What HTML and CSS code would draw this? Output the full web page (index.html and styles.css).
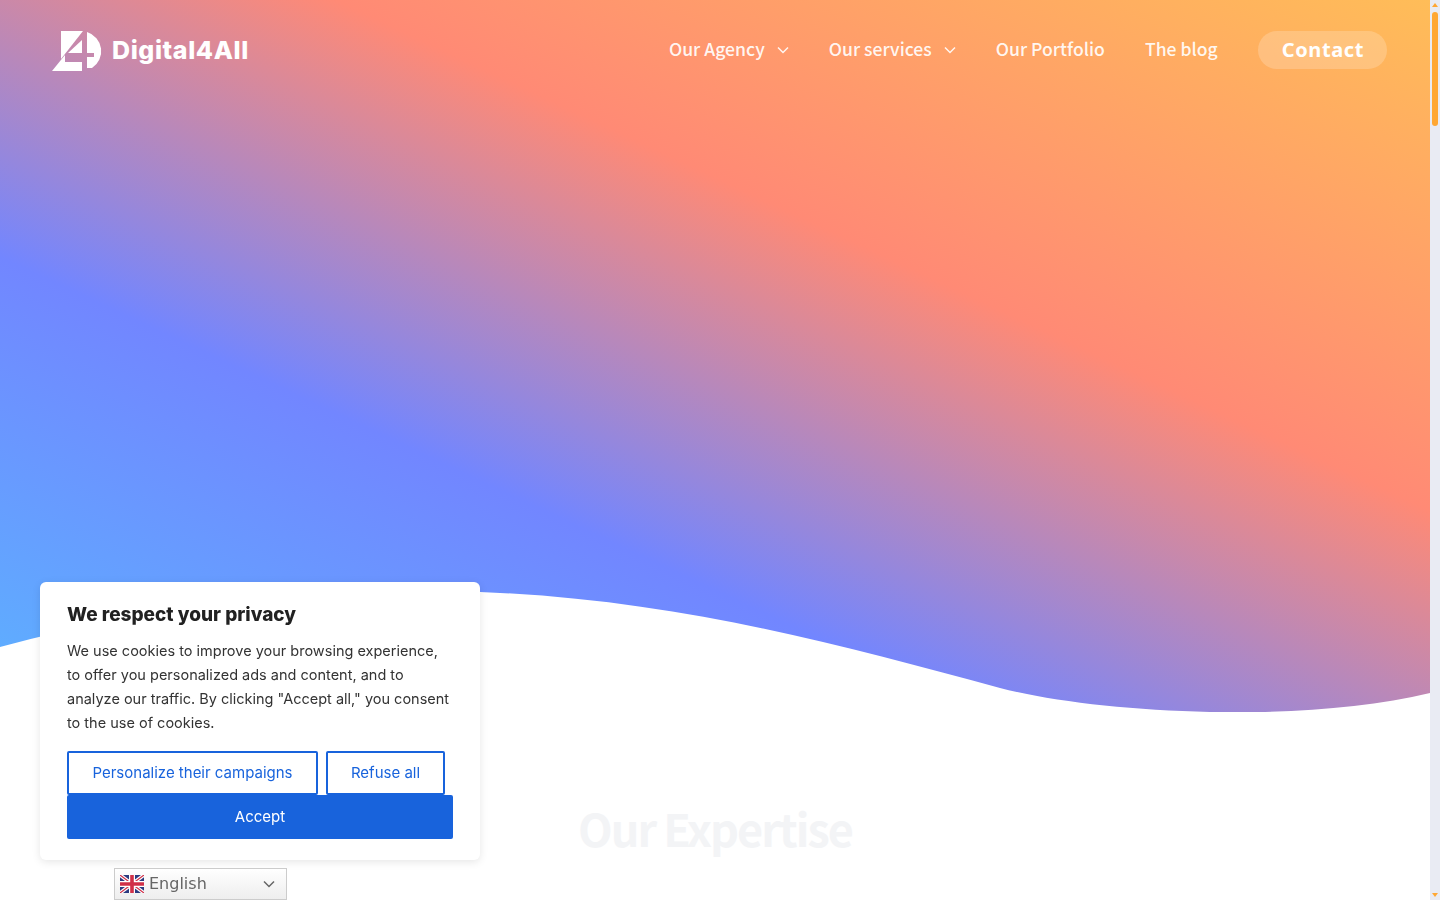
FILE: index.html
```html
<!DOCTYPE html>
<html lang="en">
<head>
    <meta charset="UTF-8">
    <meta name="viewport" content="width=device-width, initial-scale=1.0">
    <title>Digital4All</title>
    <link rel="stylesheet" href="styles.css">
</head>
<body>
    <div class="window">
        <div class="page">
            <section class="hero">
                <header class="site-header">
                    <a class="logo" href="#">
                        <svg class="logo-mark" width="52" height="42" viewBox="52 29 52 42">
                            <path d="M61 31H83L61 59Z"/>
                            <path d="M52 71L65 55V62H82V71Z"/>
                            <path d="M82 40V53H68Z"/>
                            <path d="M87 32A20 20 0 0 1 92 68L87 68V57H94V53H87Z"/>
                        </svg>
                        <span class="logo-text">Digital4All</span>
                    </a>
                    <nav class="main-nav">
                        <a class="nav-link" href="#">Our Agency
                            <svg class="chevron" width="12" height="8" viewBox="0 0 12 8"><path d="M1 1.5L6 6.5L11 1.5"/></svg>
                        </a>
                        <a class="nav-link" href="#">Our services
                            <svg class="chevron" width="12" height="8" viewBox="0 0 12 8"><path d="M1 1.5L6 6.5L11 1.5"/></svg>
                        </a>
                        <a class="nav-link" href="#">Our Portfolio</a>
                        <a class="nav-link" href="#">The blog</a>
                        <a class="contact-btn" href="#">Contact</a>
                    </nav>
                </header>
                <svg class="wave" width="1430" height="130" viewBox="0 582 1430 130">
                    <path d="M0 647C150 606 320 585 480 592C680 600 840 645 1000 688C1100 714 1300 724 1430 693V712H0Z"/>
                </svg>
            </section>
            <section class="expertise">
                <h2>Our Expertise</h2>
            </section>
        </div>
        <div class="scrollbar">
            <span class="arrow-up"></span>
            <span class="thumb"></span>
            <span class="arrow-down"></span>
        </div>
    </div>

    <div class="cookie-card">
        <h3>We respect your privacy</h3>
        <p>We use cookies to improve your browsing experience, to offer you personalized ads and content, and to analyze our traffic. By clicking "Accept all," you consent to the use of cookies.</p>
        <div class="cookie-actions">
            <button class="btn-outline btn-personalize">Personalize their campaigns</button>
            <button class="btn-outline btn-refuse">Refuse all</button>
            <button class="btn-accept">Accept</button>
        </div>
    </div>

    <div class="lang-select">
        <svg class="flag" width="24" height="18" viewBox="0 0 24 18">
            <rect width="24" height="18" fill="#2b3a80"/>
            <path d="M0 0L24 18M24 0L0 18" stroke="#fff" stroke-width="3.6"/>
            <path d="M0 0L24 18M24 0L0 18" stroke="#d03048" stroke-width="1.2"/>
            <path d="M12 0V18M0 9H24" stroke="#fff" stroke-width="6"/>
            <path d="M12 0V18M0 9H24" stroke="#d03048" stroke-width="3.6"/>
        </svg>
        <span class="lang-name">English</span>
        <svg class="lang-chevron" width="12" height="8" viewBox="0 0 12 8"><path d="M1 1.5L6 6.5L11 1.5"/></svg>
    </div>
</body>
</html>
```

FILE: styles.css
```css
html, body {
    margin: 0;
    height: 100%;
    overflow: hidden;
}

body {
    font-family: "Noto Sans CJK SC", "Noto Sans", sans-serif;
    background-color: white;
}

a {
    color: inherit;
    text-decoration: none;
}

.window {
    display: flex;
    height: 900px;
}

.page {
    flex: 1;
    overflow: hidden;
}

/* hero */
.hero {
    position: relative;
    height: 712px;
    background: linear-gradient(25deg, #5cb2ff 0%, #7286ff 33%, #ff8a75 63%, #ffbd58 100%);
}

.site-header {
    display: flex;
    justify-content: space-between;
    align-items: center;
    padding: 29px 43px 0 52px;
    color: white;
}

.logo {
    display: flex;
    align-items: center;
    gap: 8px;
}

.logo-mark {
    fill: white;
}

.logo-text {
    margin-top: -1px;
    font-family: Inter, sans-serif;
    font-size: 25px;
    font-weight: 800;
    letter-spacing: 0.6px;
}

.main-nav {
    display: flex;
    align-items: center;
    gap: 40px;
    font-size: 17.6px;
    font-weight: 500;
    color: rgba(255, 255, 255, 0.92);
}

.nav-link {
    display: flex;
    align-items: center;
    gap: 12px;
    padding-bottom: 4px;
}

.chevron {
    margin-top: 4px;
    fill: none;
    stroke: rgba(255, 255, 255, 0.9);
    stroke-width: 1.5;
}

.contact-btn {
    display: flex;
    align-items: center;
    box-sizing: border-box;
    height: 38px;
    padding: 0 23px 2px 24px;
    border-radius: 19px;
    background: rgba(255, 255, 255, 0.2);
    font-family: "Noto Sans", sans-serif;
    font-size: 20px;
    font-weight: 700;
    letter-spacing: 0.6px;
    color: white;
}

.wave {
    position: absolute;
    left: 0;
    bottom: 0;
    display: block;
    fill: white;
}

/* expertise */
.expertise {
    padding-top: 86px;
    text-align: center;
}

.expertise h2 {
    margin: 0;
    font-size: 45px;
    font-weight: 700;
    line-height: 60px;
    letter-spacing: -2px;
    color: #f3f4f6;
}

/* scrollbar */
.scrollbar {
    position: relative;
    width: 10px;
    background: #e9ebf3;
}

.thumb {
    position: absolute;
    left: 2px;
    top: 12px;
    width: 6px;
    height: 114px;
    border-radius: 3px;
    background: #ffa733;
}

.arrow-up, .arrow-down {
    position: absolute;
    left: 2px;
    width: 0;
    height: 0;
    border-left: 3px solid transparent;
    border-right: 3px solid transparent;
}

.arrow-up {
    top: 3px;
    border-bottom: 4px solid #ffa733;
}

.arrow-down {
    bottom: 3px;
    border-top: 4px solid #ffa733;
}

/* cookie banner */
.cookie-card {
    position: fixed;
    left: 40px;
    top: 582px;
    box-sizing: border-box;
    width: 440px;
    height: 278px;
    padding: 21px 27px;
    background: white;
    border-radius: 6px;
    box-shadow: 0 2px 8px rgba(0, 0, 0, 0.1);
    font-family: Inter, sans-serif;
    color: #212121;
}

.cookie-card h3 {
    margin: 0;
    font-size: 19px;
    font-weight: 800;
    line-height: 24px;
}

.cookie-card p {
    margin: 12px 0 16px;
    font-size: 14.5px;
    line-height: 24px;
    color: #333;
}

.cookie-actions {
    display: flex;
    flex-wrap: wrap;
    column-gap: 8px;
}

.cookie-actions button {
    box-sizing: border-box;
    height: 44px;
    padding-bottom: 2px;
    border-radius: 2px;
    font-family: Inter, sans-serif;
    font-size: 15px;
    cursor: pointer;
}

.btn-outline {
    background: white;
    border: 2px solid #1863dc;
    color: #1863dc;
}

.btn-personalize {
    width: 251px;
}

.btn-refuse {
    width: 119px;
}

.btn-accept {
    width: 386px;
    background: #1863dc;
    border: none;
    color: white;
}

/* language switcher */
.lang-select {
    position: fixed;
    left: 114px;
    top: 868px;
    box-sizing: border-box;
    display: flex;
    align-items: center;
    width: 173px;
    height: 32px;
    padding: 0 11px 0 5px;
    border: 1px solid #ccc;
    background: linear-gradient(#fff, #eee);
    font-family: "DejaVu Sans", sans-serif;
    font-size: 16px;
    color: #666;
}

.flag {
    margin-right: 5px;
}

.lang-name {
    flex: 1;
    padding-bottom: 2px;
}

.lang-chevron {
    fill: none;
    stroke: #666;
    stroke-width: 1.5;
}
```
